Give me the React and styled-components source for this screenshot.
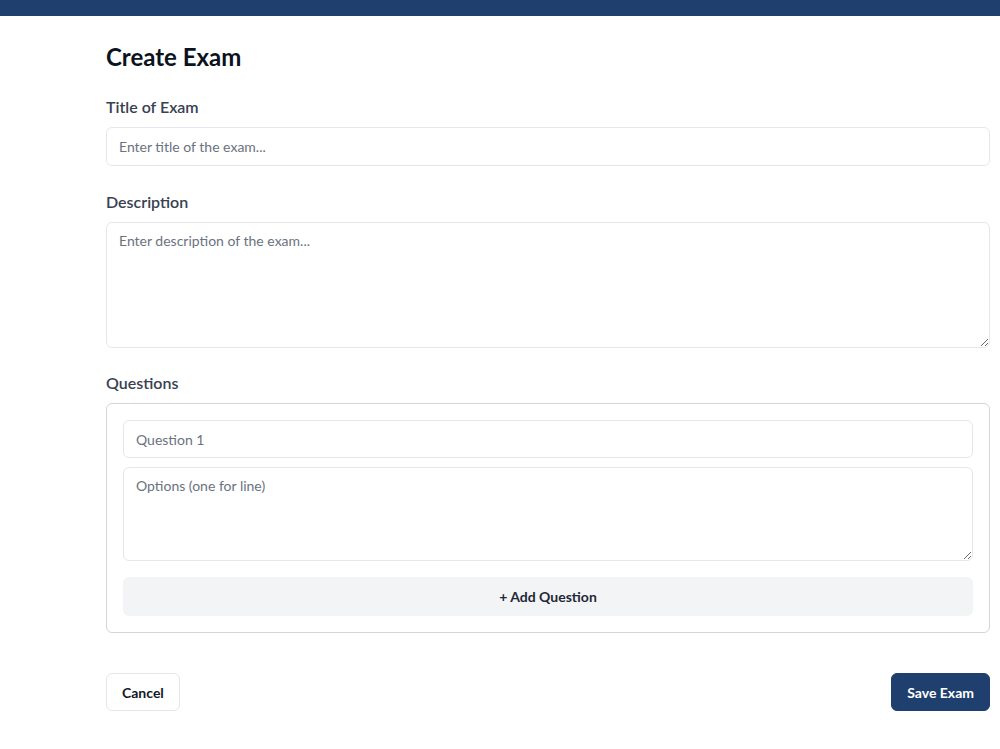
import styled, { createGlobalStyle } from "styled-components";

const GlobalStyle = createGlobalStyle`
  * { box-sizing: border-box; }
  body {
    margin: 0;
    background: #ffffff;
    font-family: Lato, "Noto Sans", sans-serif;
    color: #111827;
  }
`;

const TopBar = styled.div`
  height: 16px;
  background: #1f3f6f;
`;

const Page = styled.main`
  padding: 25px 10px 40px 106px;
`;

const Heading = styled.h1`
  margin: 0 0 24px;
  font-size: 24px;
  line-height: 32px;
  font-weight: 700;
  color: #0b1220;
`;

const Field = styled.div`
  margin-bottom: ${(p) => p.$gap ?? 26}px;
`;

const Label = styled.label`
  display: block;
  font-size: 16px;
  line-height: 20px;
  font-weight: 600;
  color: #374151;
  margin-bottom: 10px;
`;

const inputBase = `
  display: block;
  width: 100%;
  border: 1px solid #e5e7eb;
  border-radius: 6px;
  background: #fff;
  font-family: Lato, "Noto Sans", sans-serif;
  font-size: 14px;
  color: #111827;
  padding: 0 12px;
  outline: none;
  &::placeholder { color: #6b7280; }
`;

const Input = styled.input`
  ${inputBase}
  height: ${(p) => p.$h || 39}px;
`;

const TextArea = styled.textarea`
  ${inputBase}
  height: ${(p) => p.$h}px;
  padding-top: 9px;
  line-height: 18px;
  resize: vertical;
`;

const QuestionBox = styled.div`
  border: 1px solid #d1d5db;
  border-radius: 6px;
  padding: 16px;
  display: flex;
  flex-direction: column;
  gap: 9px;
`;

const AddButton = styled.button`
  margin-top: 7px;
  height: 39px;
  border: none;
  border-radius: 6px;
  background: #f3f4f6;
  font-family: Lato, "Noto Sans", sans-serif;
  font-size: 14px;
  font-weight: 700;
  color: #1f2937;
  cursor: pointer;
`;

const Actions = styled.div`
  display: flex;
  justify-content: space-between;
  margin-top: 40px;
`;

const Button = styled.button`
  height: 38px;
  padding: 0 15px;
  border-radius: 6px;
  font-family: Lato, "Noto Sans", sans-serif;
  font-size: 14px;
  font-weight: 700;
  cursor: pointer;
  border: 1px solid ${(p) => (p.$primary ? "#1f3f6f" : "#e5e7eb")};
  background: ${(p) => (p.$primary ? "#1f3f6f" : "#fff")};
  color: ${(p) => (p.$primary ? "#fff" : "#111827")};
`;

export default function App() {
  return (
    <>
      <GlobalStyle />
      <TopBar />
      <Page>
        <Heading>Create Exam</Heading>
        <Field>
          <Label>Title of Exam</Label>
          <Input placeholder="Enter title of the exam..." />
        </Field>
        <Field $gap={25}>
          <Label>Description</Label>
          <TextArea $h={126} placeholder="Enter description of the exam..." />
        </Field>
        <Field $gap={0}>
          <Label>Questions</Label>
          <QuestionBox>
            <Input $h={38} placeholder="Question 1" />
            <TextArea $h={94} placeholder="Options (one for line)" />
            <AddButton>+ Add Question</AddButton>
          </QuestionBox>
        </Field>
        <Actions>
          <Button>Cancel</Button>
          <Button $primary>Save Exam</Button>
        </Actions>
      </Page>
    </>
  );
}
